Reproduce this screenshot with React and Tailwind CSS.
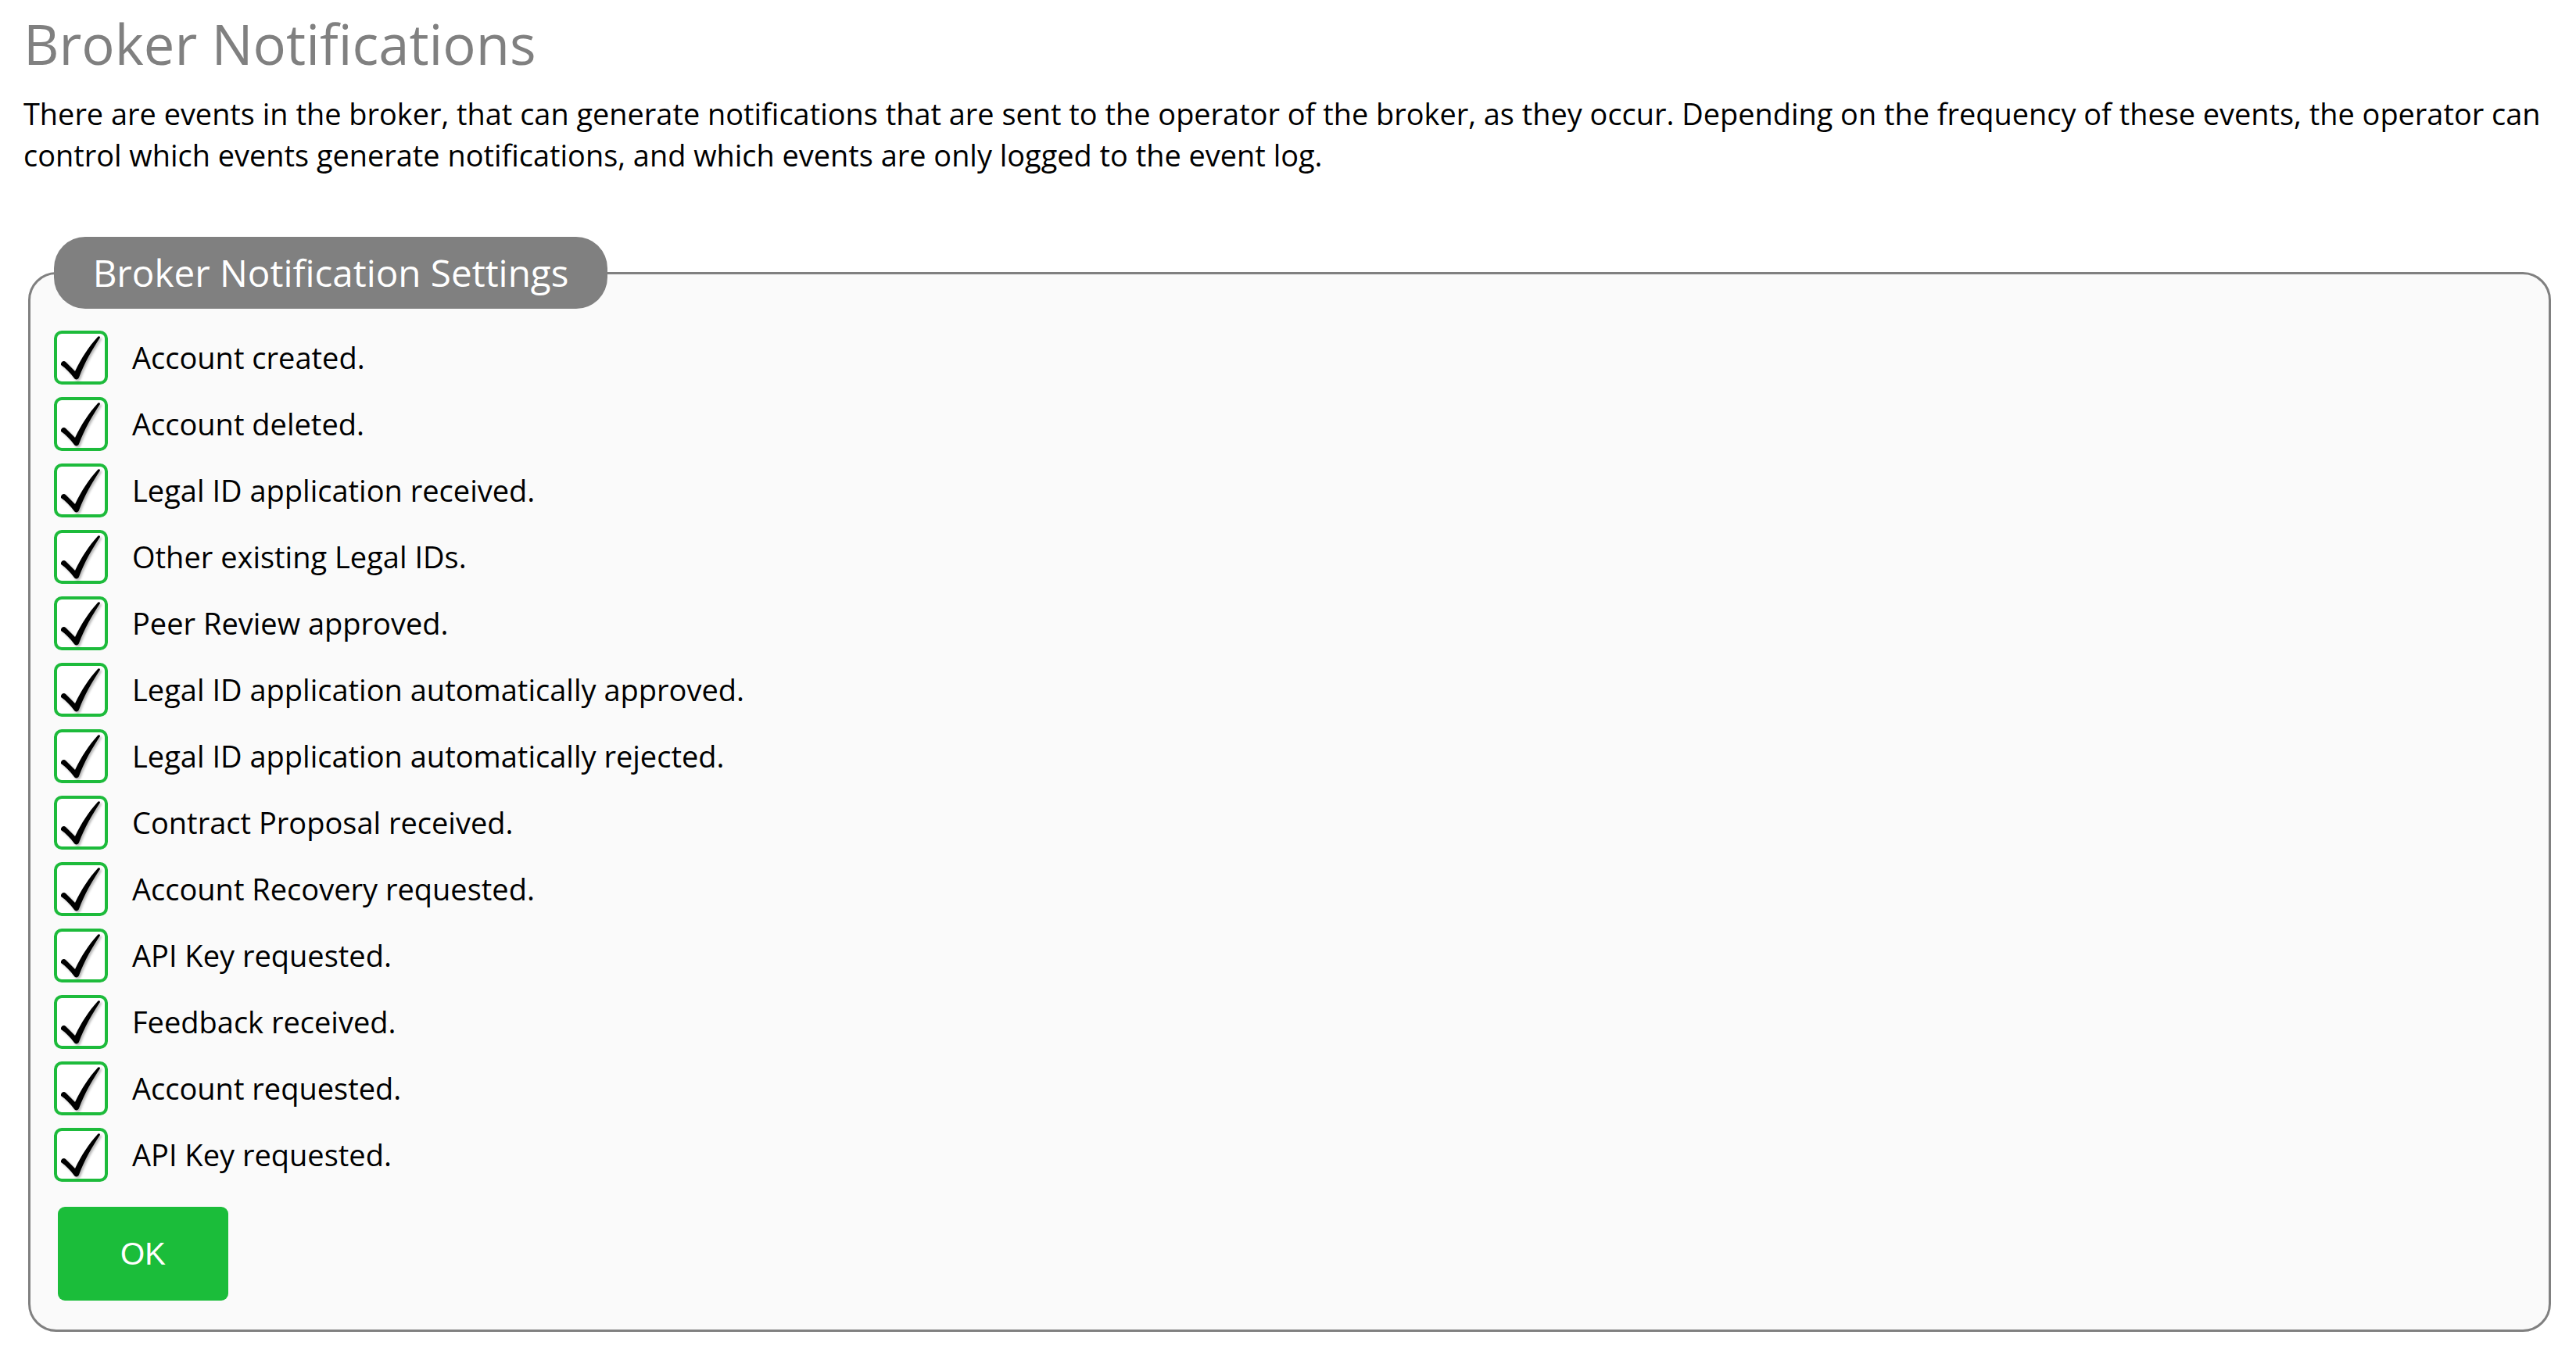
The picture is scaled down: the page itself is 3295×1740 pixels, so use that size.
import { useState } from "react";

const events = [
  "Account created.",
  "Account deleted.",
  "Legal ID application received.",
  "Other existing Legal IDs.",
  "Peer Review approved.",
  "Legal ID application automatically approved.",
  "Legal ID application automatically rejected.",
  "Contract Proposal received.",
  "Account Recovery requested.",
  "API Key requested.",
  "Feedback received.",
  "Account requested.",
  "API Key requested.",
];

// brush-style tick drawn inside each box
function Tick() {
  return (
    <svg
      viewBox="0 0 61 61"
      className="h-full w-full drop-shadow-[2px_2px_1.5px_rgba(0,0,0,0.3)]"
    >
      <path
        d="M5,38 C6,35 9,34 11,36 L23,48 C31,31 41,16 52,4 C53,3 55,3 55,5 C45,20 35,37 28,56 C27,59 23,59 22,57 C17,50 11,44 5,40 Z"
        fill="#000"
      />
    </svg>
  );
}

function EventRow({ label, checked, onToggle }) {
  return (
    <label className="flex items-center gap-[31px] cursor-pointer">
      <span
        onClick={onToggle}
        className="flex h-[69px] w-[69px] shrink-0 items-center justify-center rounded-[10px] border-4 border-[#1dbb3b] bg-white"
      >
        {checked && <Tick />}
      </span>
      <span className="text-[38px] text-black">{label}</span>
    </label>
  );
}

export default function App() {
  const [checked, setChecked] = useState(events.map(() => true));

  const toggle = (i) =>
    setChecked((prev) => prev.map((v, j) => (j === i ? !v : v)));

  return (
    <div className="min-h-screen bg-white pl-[30px] pr-[30px] pt-[8px] font-['Open_Sans','Noto_Sans',sans-serif]">
      <h1 className="text-[70.5px] leading-[96px] font-normal text-[#808080]">
        Broker Notifications
      </h1>
      <p className="mt-[15px] text-[37.9px] leading-[52.5px] text-black">
        There are events in the broker, that can generate notifications that are sent to the operator of the broker, as they occur. Depending on the frequency of these events, the operator can control which events generate notifications, and which events are only logged to the event log.
      </p>

      <fieldset className="mt-[79px] ml-[6px] mr-[2px] rounded-[36px] border-[3px] border-[#808080] bg-[#fafafa] px-[30px] pb-[37px]">
        <legend className="flex h-[92px] w-[708px] items-center justify-center rounded-[40px] bg-[#808080] text-[47.6px] text-white">
          Broker Notification Settings
        </legend>
        <div className="flex flex-col gap-[16px] pt-[28px]">
          {events.map((e, i) => (
            <EventRow
              key={i}
              label={e}
              checked={checked[i]}
              onToggle={() => toggle(i)}
            />
          ))}
        </div>
        <button className="mt-[32px] ml-[5px] h-[120px] w-[218px] rounded-[9px] bg-[#1bbd3a] font-['Liberation_Sans',Arial,sans-serif] text-[40px] text-white">
          OK
        </button>
      </fieldset>
    </div>
  );
}
